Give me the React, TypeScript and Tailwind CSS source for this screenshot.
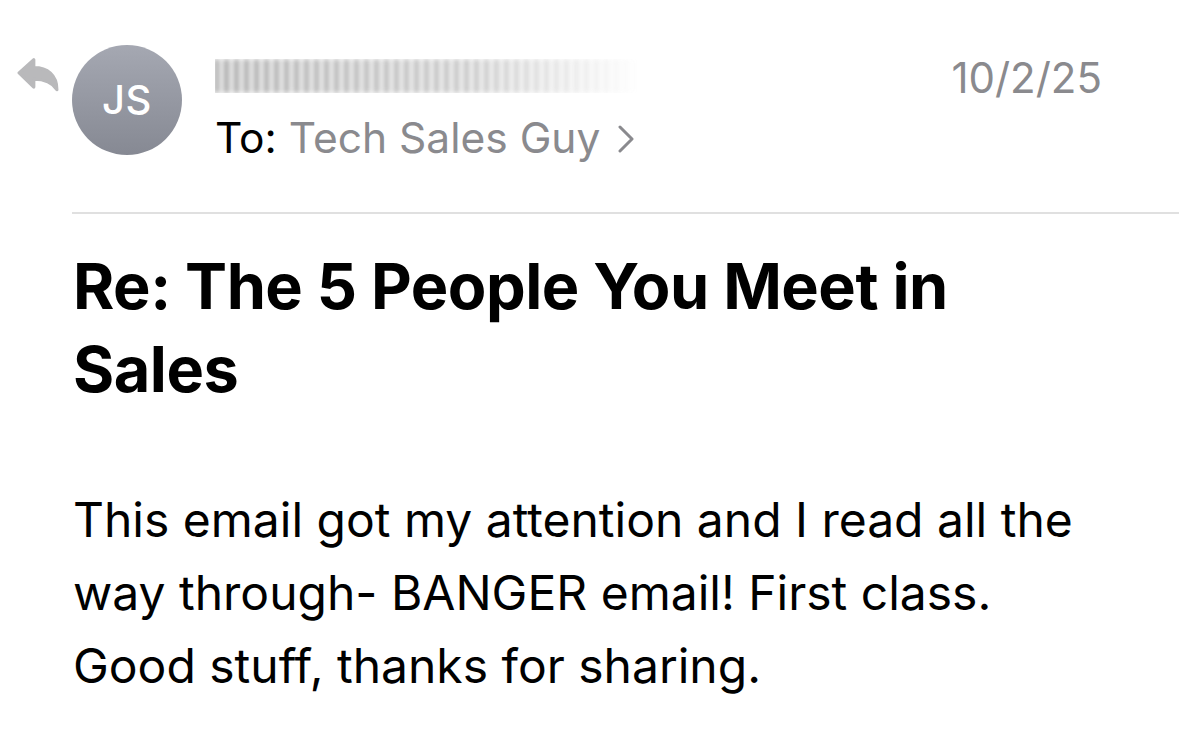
import React from "react";

export default function App() {
  const font = { fontFamily: 'Inter, "Noto Sans", sans-serif' };
  return (
    <div className="w-[1179px] h-[729px] bg-white overflow-hidden text-black" style={font}>
      <div className="flex items-start pt-[45px]">
        <div className="w-[72px] shrink-0 pt-[12px] pl-[17px]">
          <svg width="42" height="36" viewBox="0 0 40 34">
            <path
              d="M2 15 L16 2.5 L16 10 C29 10 38 17 38 31 C34 24.5 28 21 16 21 L16 28.5 Z"
              fill="#b9b9bb"
              stroke="#b9b9bb"
              strokeWidth="3"
              strokeLinejoin="round"
            />
          </svg>
        </div>
        <div className="w-[110px] h-[110px] rounded-full shrink-0 flex items-center justify-center bg-gradient-to-b from-[#a5a8b2] to-[#868993]">
          <span className="text-white text-[40px] font-medium tracking-[0.5px]">JS</span>
        </div>
        <div className="ml-[33px] flex flex-col">
          <div className="h-[50px] flex items-end pb-[2px]">
            <div
              className="h-[34px] w-[424px] blur-[2.5px] opacity-60"
              style={{
                backgroundImage:
                  "repeating-linear-gradient(90deg, #3a3a3a 0px, #3a3a3a 3px, #d8d8d8 3px, #d8d8d8 10px)",
                maskImage: "linear-gradient(90deg, black 0%, rgba(0,0,0,0.7) 60%, transparent 100%)",
                WebkitMaskImage: "linear-gradient(90deg, black 0%, rgba(0,0,0,0.7) 60%, transparent 100%)",
              }}
            />
          </div>
          <div className="mt-[15px] flex items-center text-[42.5px] leading-[56px] whitespace-nowrap">
            <span className="text-black">To:&nbsp;</span>
            <span className="text-[#8a8a8e]">Tech Sales Guy</span>
            <svg className="ml-[18px] mt-[2px]" width="16" height="28" viewBox="0 0 16 28">
              <path d="M2 2 L14 14 L2 26" fill="none" stroke="#8a8a8e" strokeWidth="3" strokeLinecap="round" strokeLinejoin="round" />
            </svg>
          </div>
        </div>
        <div className="ml-auto pr-[77px] pt-[7px] text-[42px] leading-[52px] text-[#8a8a8e]">10/2/25</div>
      </div>
      <div className="ml-[72px] mt-[46px] h-[2px] bg-[#e0e0e0]" />
      <div className="pl-[73px] pt-[31px] text-[63px] leading-[83px] font-bold tracking-[-0.5px]">
        Re: The 5 People You Meet in
        <br />
        Sales
      </div>
      <div className="pl-[73px] pt-[72px] text-[48px] leading-[73px]">
        This email got my attention and I read all the
        <br />
        way through- BANGER email! First class.
        <br />
        Good stuff, thanks for sharing.
      </div>
    </div>
  );
}
